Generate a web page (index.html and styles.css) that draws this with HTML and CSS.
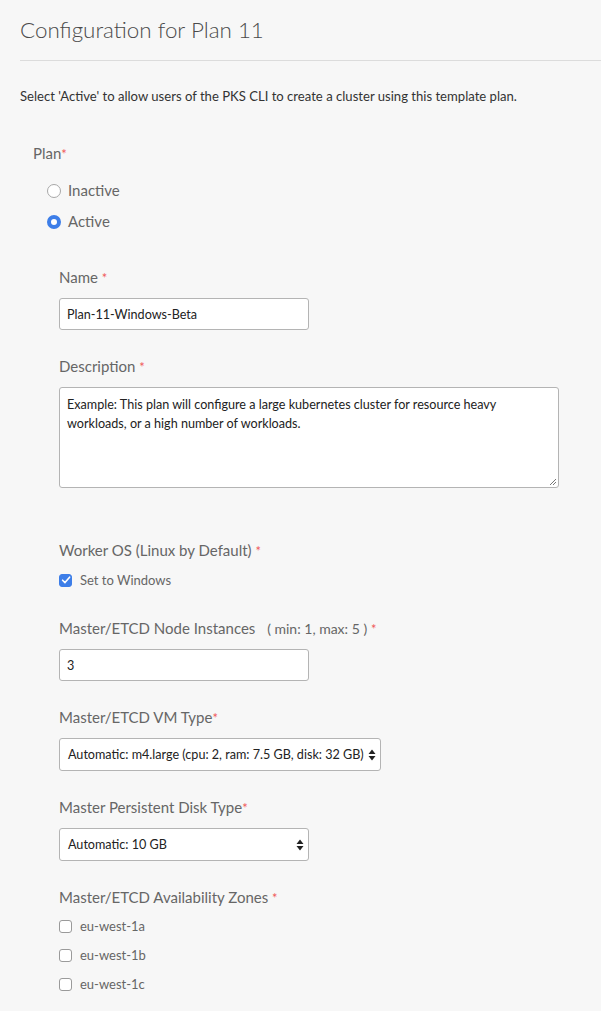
FILE: index.html
```html
<!DOCTYPE html>
<html>
<head>
<meta charset="utf-8">
<link rel="stylesheet" href="styles.css">
</head>
<body>
<div class="page">
  <h1 class="title">Configuration for Plan 11</h1>
  <div class="rule"></div>
  <p class="intro">Select 'Active' to allow users of the PKS CLI to create a cluster using this template plan.</p>

  <div class="plan">
    <div class="plan-label">Plan<span class="req">*</span></div>
    <div class="radios">
      <label class="radio"><span class="radio-dot"></span><span>Inactive</span></label>
      <label class="radio"><span class="radio-dot on"></span><span>Active</span></label>
    </div>

    <div class="fields">
      <div class="field">
        <div class="label">Name <span class="req">*</span></div>
        <div class="input w250">Plan-11-Windows-Beta</div>
      </div>

      <div class="field">
        <div class="label">Description <span class="req">*</span></div>
        <div class="textarea">Example: This plan will configure a large kubernetes cluster for resource heavy workloads, or a high number of workloads.
          <svg class="grip" width="8" height="8" viewBox="0 0 8 8"><path d="M7 1 L1 7 M7 4 L4 7" stroke="#777" stroke-width="1"/></svg>
        </div>
      </div>

      <div class="field worker">
        <div class="label">Worker OS (Linux by Default) <span class="req">*</span></div>
        <div class="checks">
          <label class="check"><span class="box on"><svg width="10" height="10" viewBox="0 0 10 10"><path d="M1.6 5.2 L4 7.6 L8.6 2.2" fill="none" stroke="#fff" stroke-width="1.6" stroke-linecap="round" stroke-linejoin="round"/></svg></span><span>Set to Windows</span></label>
        </div>
      </div>

      <div class="field">
        <div class="label">Master/ETCD Node Instances <span class="hint">( min: 1, max: 5 )</span> <span class="req">*</span></div>
        <div class="input w250">3</div>
      </div>

      <div class="field">
        <div class="label">Master/ETCD VM Type<span class="req">*</span></div>
        <div class="select w322"><span>Automatic: m4.large (cpu: 2, ram: 7.5 GB, disk: 32 GB)</span><svg class="arrows" width="8" height="12" viewBox="0 0 8 12"><path d="M4 0.5 L7.5 5 L0.5 5 Z M4 11.5 L7.5 7 L0.5 7 Z" fill="#222"/></svg></div>
      </div>

      <div class="field">
        <div class="label">Master Persistent Disk Type<span class="req">*</span></div>
        <div class="select w250"><span>Automatic: 10 GB</span><svg class="arrows" width="8" height="12" viewBox="0 0 8 12"><path d="M4 0.5 L7.5 5 L0.5 5 Z M4 11.5 L7.5 7 L0.5 7 Z" fill="#222"/></svg></div>
      </div>

      <div class="field">
        <div class="label">Master/ETCD Availability Zones <span class="req">*</span></div>
        <div class="checks zones">
          <label class="check"><span class="box"></span><span>eu-west-1a</span></label>
          <label class="check"><span class="box"></span><span>eu-west-1b</span></label>
          <label class="check"><span class="box"></span><span>eu-west-1c</span></label>
        </div>
      </div>
    </div>
  </div>
</div>
</body>
</html>
```
FILE: styles.css
```css
html, body {
  margin: 0;
  padding: 0;
  background: #f7f7f7;
}
body {
  font-family: "Lato", "Open Sans", sans-serif;
  color: #333;
  width: 601px;
  height: 1011px;
  overflow: hidden;
}
.page {
  padding-left: 20px;
}
.title {
  margin: 0;
  padding-top: 14px;
  font-size: 22.4px;
  font-weight: 300;
  color: #4a4a4a;
  line-height: 32px;
  height: 32px;
}
.rule {
  margin-top: 14px;
  height: 1px;
  background: #dcdcdc;
}
.intro {
  margin: 27px 0 0 0;
  font-size: 13.1px;
  line-height: 16px;
  color: #333;
}
.plan {
  padding-left: 13px;
  margin-top: 39px;
}
.plan-label {
  font-size: 15px;
  line-height: 20px;
  color: #666;
}
.req {
  color: #f05a5a;
  font-size: 13px;
}
.radios {
  margin-top: 16px;
  padding-left: 14px;
  display: flex;
  flex-direction: column;
  gap: 11px;
}
.radio {
  display: flex;
  align-items: center;
  gap: 7px;
  font-size: 15px;
  line-height: 20px;
  color: #666;
}
.radio-dot {
  width: 14px;
  height: 14px;
  border-radius: 50%;
  border: 1px solid #a8a8a8;
  background: #fff;
  box-sizing: border-box;
  margin-top: 2px;
}
.radio-dot.on {
  border: 4.5px solid #3d7ee8;
  background: #fff;
}
.fields {
  padding-left: 26px;
  margin-top: 36px;
  display: flex;
  flex-direction: column;
}
.field {
  margin-bottom: 26px;
}
.field.worker {
  margin-top: 26px;
  margin-bottom: 30px;
}
.label {
  font-size: 15px;
  line-height: 20px;
  color: #666;
  margin-bottom: 10px;
}
.hint {
  font-size: 14px;
  margin-left: 8px;
}
.input, .select, .textarea {
  box-sizing: border-box;
  background: #fff;
  border: 1px solid #b4b4b4;
  border-radius: 3px;
  font-size: 12.6px;
  color: #222;
}
.input {
  height: 32px;
  display: flex;
  align-items: center;
  padding-left: 7px;
}
.w250 { width: 250px; }
.w322 { width: 322px; }
.textarea {
  position: relative;
  width: 500px;
  height: 101px;
  padding: 7px 7px;
  line-height: 19px;
}
.grip {
  position: absolute;
  right: 1px;
  bottom: 1px;
}
.select {
  height: 33px;
  display: flex;
  align-items: center;
  justify-content: space-between;
  padding: 0 4px 0 8px;
}
.checks {
  display: flex;
  flex-direction: column;
  gap: 15px;
}
.field.worker .label { margin-bottom: 11px; }
.check {
  display: flex;
  align-items: center;
  gap: 8px;
  font-size: 13px;
  line-height: 16px;
  color: #666;
}
.box {
  width: 13px;
  height: 13px;
  box-sizing: border-box;
  border: 1px solid #9a9a9a;
  border-radius: 3px;
  background: #fff;
  display: flex;
  align-items: center;
  justify-content: center;
}
.box.on {
  background: #3d7ee8;
  border-color: #3d7ee8;
}
.zones {
  gap: 13px;
  margin-top: 1px;
}
```
